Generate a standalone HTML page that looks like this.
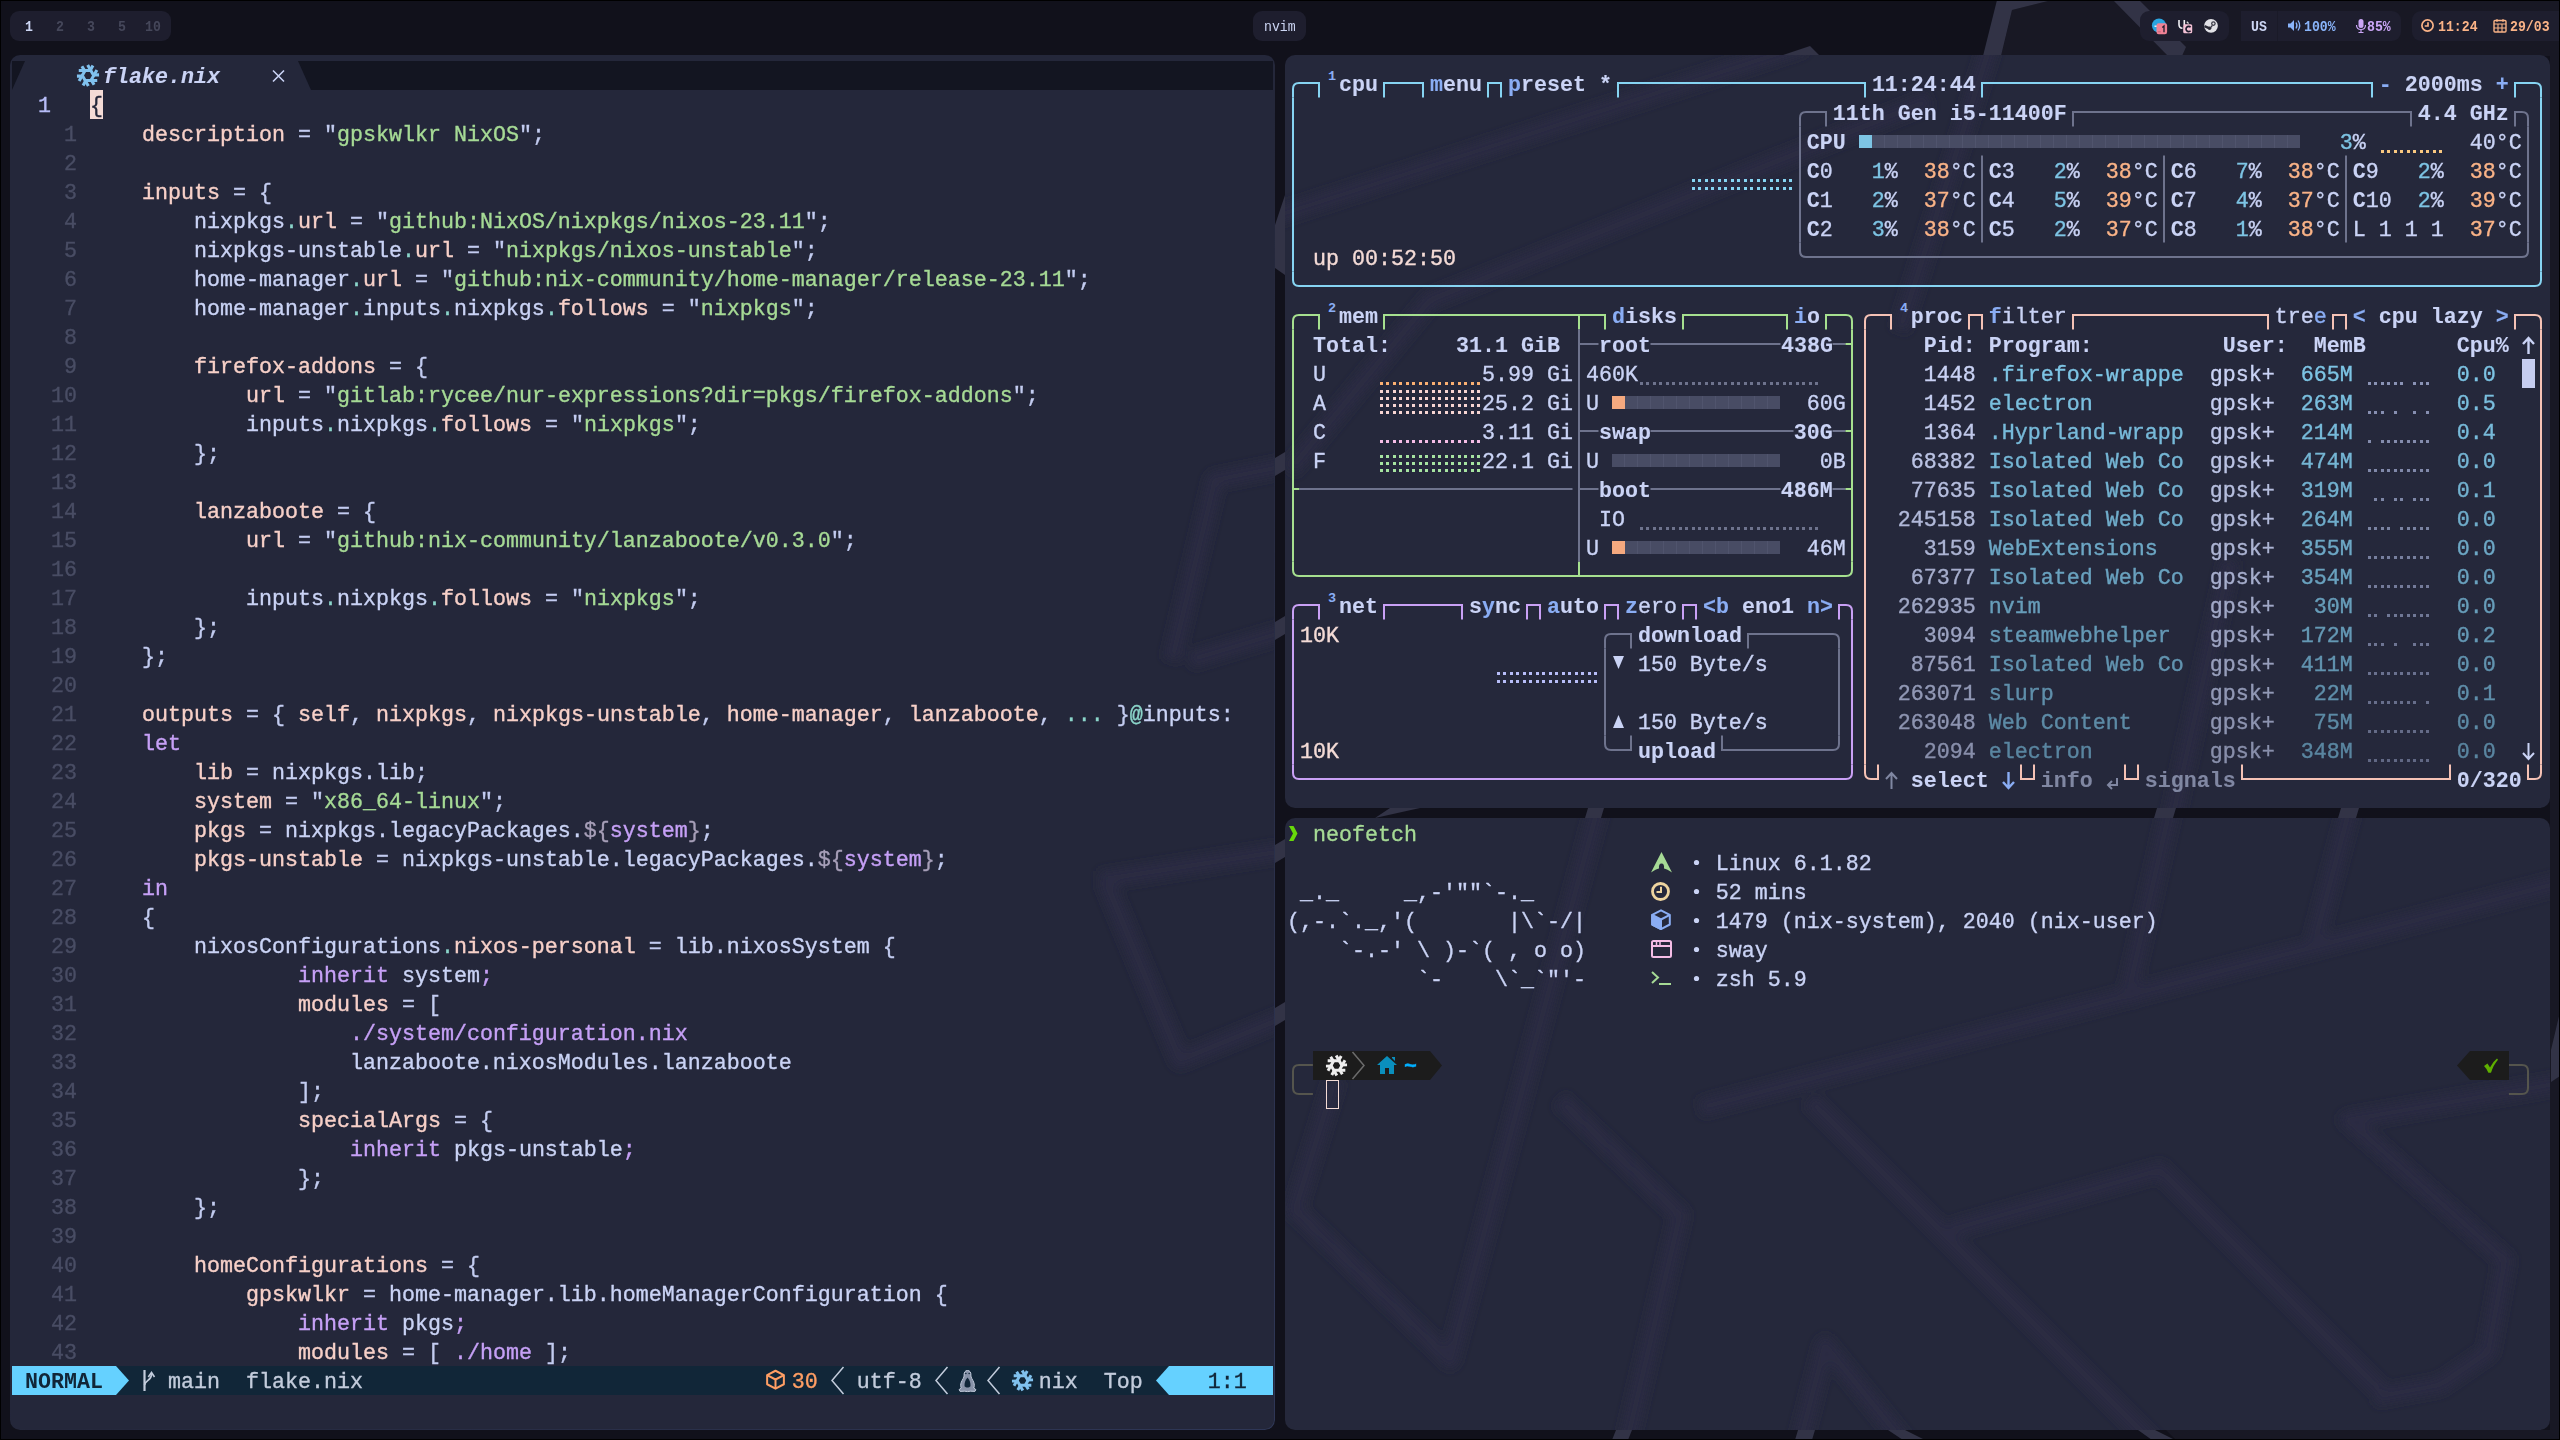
<!DOCTYPE html>
<html><head><meta charset="utf-8"><title>desktop</title>
<style>
*{margin:0;padding:0;box-sizing:border-box}
html,body{width:2560px;height:1440px;overflow:hidden;background:#11111b}
body{position:relative;font-family:"Liberation Mono",monospace}
.win{position:absolute;background:#24273a;border-radius:10px;overflow:hidden}
.act::after{content:'';position:absolute;left:0;top:0;right:0;bottom:0;border-radius:10px;padding:1px;background:linear-gradient(135deg,rgba(46,53,86,0) 50%,#2f3757 100%);-webkit-mask:linear-gradient(#000 0 0) content-box,linear-gradient(#000 0 0);-webkit-mask-composite:xor;mask-composite:exclude}
.term{position:absolute}
.term i,.term svg{position:absolute;display:block}
.term>svg{left:0;top:0;overflow:visible}
.r{position:absolute;left:0;height:29px;line-height:29px;font-size:21.66px;white-space:pre;color:#cad3f5;transform:scaleY(1.06);transform-origin:0 20px;-webkit-text-stroke:0.35px}
.r b{font-weight:400}
#wp{position:absolute;left:0;top:0}
.pill{position:absolute;top:11px;height:30px;background:#1e1e2e;border-radius:9px}
.bt{position:absolute;top:12px;height:31px;line-height:31px;font-size:13.2px;font-weight:700;white-space:pre;transform:scaleY(1.1);transform-origin:0 16px}
/* nvim */
.f{color:#f7d0c8}.p{color:#c3ccf0}.s{color:#a6da95}.d{color:#8bd5ca}.k{color:#c6a0f6}.i{color:#a79fb8}
.ln{color:#494d64}.cl{color:#b7bdf8}.cur{color:#24273a}
.tab{color:#cad3f5;font-weight:700!important;font-style:italic;-webkit-text-stroke:0.1px}
.smode{color:#112638;font-weight:700!important;-webkit-text-stroke:0}.smode2{color:#112638}
.sl{color:#c3ccdc}.sor{color:#ff9e64}
/* btop */
.ti{font-weight:700!important;color:#cad3f5;-webkit-text-stroke:0.1px}.hi{color:#8aadf4}.bd{font-weight:700!important;-webkit-text-stroke:0.1px}
.supd{position:absolute;font:700 13.5px/14px "Liberation Mono",monospace;color:#8aadf4}
.cy{color:#7dc4e4}.pe{color:#fab387}.rw{color:#f4dbd6}.pc{color:#7dc4e4}.ina{color:#8087a2}
/* neofetch */
.gr{color:#a6da95}.tilde{color:#00afff;font-weight:700!important}
</style></head>
<body>
<svg id="wp" width="2560" height="1440">
<path d="M2001 56L2012 10L2052 0H2560V1440H2176L2166 1430H2550V56z" fill="#181824"/>
<path d="M1983 56L1997 0H2052L2012 10L2001 56z" fill="#323346"/>
<path d="M2113 0H2139L2186 47L2182 56H2168z" fill="#323346"/>
<path d="M1780 56L1810 46L1820 56z" fill="#323346"/>
<path d="M1612 1440L1616 1430H1632L1628 1440z M1795 1440L1798 1430H1815L1812 1440z M1888 1430H1905L1925 1440H1903z M2138 1430H2155L2175 1440H2152z" fill="#323346"/>
<path d="M1375 818L1420 808H1390z M1585 818L1588 808H1604L1601 818z M2157 808H2176L2173 818H2154z M2341 808H2359L2356 818H2338z" fill="#323346"/>
<path d="M1285 195V275L1275 268V225z M1275 458L1285 452V470L1275 476z M1275 622L1285 616V634L1275 640z M1275 845L1285 839V857L1275 863z M1275 1008L1285 1002V1020L1275 1026z M2560 1012L2551 1050V1082L2560 1076z" fill="#323346"/>
</svg>
<div class="pill" style="left:10px;width:161px"></div>
<div class="bt" style="left:25px;color:#cdd6f4">1</div>
<div class="bt" style="left:56px;color:#45475a">2</div>
<div class="bt" style="left:87px;color:#45475a">3</div>
<div class="bt" style="left:118px;color:#45475a">5</div>
<div class="bt" style="left:145px;color:#45475a">10</div>
<div class="pill" style="left:1253px;width:53px"></div>
<div class="bt" style="left:1264px;color:#cdd6f4;font-weight:400">nvim</div>
<div class="pill" style="left:2140px;width:89px"></div>
<div class="pill" style="left:2241px;width:160px;border-radius:0 9px 9px 0"></div>
<div style="position:absolute;left:2277px;top:11px;width:1px;height:30px;background:#1a1a28"></div>
<div class="pill" style="left:2412px;width:148px;border-radius:9px 0 0 9px"></div>
<div class="bt" style="left:2251px;color:#cdd6f4">US</div>
<div class="bt" style="left:2304px;color:#89b4fa">100%</div>
<div class="bt" style="left:2367px;color:#cba6f7">85%</div>
<div class="bt" style="left:2438px;color:#fab387">11:24</div>
<div class="bt" style="left:2510px;color:#fab387">29/03</div>
<svg style="position:absolute;left:0;top:0" width="2560" height="55">
<circle cx="2159" cy="25.5" r="7.1" fill="#2ba5e0"/><path d="M2154.500 26.200h2.500" stroke="#fff" stroke-width="1.300"/><rect x="2156.500" y="23.200" width="10.600" height="11" rx="2.200" fill="#f18296"/><path d="M2162.300 27.400l1.700 -1.400v6.300" stroke="#1e1e2e" stroke-width="1.300" fill="none"/><path d="M2157.800 31.800h3" stroke="#c9647a" stroke-width="1"/>
<path d="M2179 20v4.500q0 3.500 3.500 3.800M2184.300 20v5" stroke="#f2f2f6" stroke-width="1.600" fill="none"/><rect x="2183.200" y="24.300" width="9" height="9" rx="1.500" fill="#f5c2d6"/><path d="M2190.600 27.300a2.600 2.600 0 1 0 0 3.400" stroke="#1e1e2e" stroke-width="1.700" fill="none"/><path d="M2186.800 21.800l1.800 1.600" stroke="#ddd" stroke-width="1.300"/>
<circle cx="2211" cy="25.800" r="6.900" fill="#e1e1e6"/><circle cx="2213.400" cy="23.600" r="2.300" fill="#3a3a46"/><circle cx="2213.400" cy="23.600" r="1.100" fill="#e1e1e6"/><path d="M2204.400 26.200l5.200 2.200" stroke="#2a2a36" stroke-width="2.400"/><circle cx="2209.600" cy="28.300" r="1.700" fill="#2a2a36"/><path d="M2210.600 27.600l1.800 -2.200" stroke="#3a3a46" stroke-width="1.400"/>
<path d="M2288 23.5h2.5l3.5 -3.5v11l-3.5 -3.5h-2.5z" fill="#89b4fa"/><path d="M2296 22.5q2 3 0 6M2298 20.5q3.4 5 0 10" stroke="#89b4fa" stroke-width="1.3" fill="none"/>
<rect x="2358.5" y="19" width="5" height="9" rx="2.5" fill="#cba6f7"/><path d="M2356.5 25q0 4.5 4.5 4.5q4.500 0 4.500 -4.500M2361 29.500v2.500M2358.500 32.500h5" stroke="#cba6f7" stroke-width="1.2" fill="none"/>
<circle cx="2427.5" cy="25.5" r="5.6" stroke="#fab387" stroke-width="1.7" fill="none"/><path d="M2428.0 22.14V26.0H2424.7" stroke="#fab387" stroke-width="1.7" fill="none"/>
<rect x="2494" y="20.500" width="12" height="11.500" rx="1" stroke="#fab387" stroke-width="1.4" fill="none"/><path d="M2494 24h12M2497 19v3M2503 19v3M2498 24v8M2502 24v8M2494 28h12" stroke="#fab387" stroke-width="1.1" fill="none"/>
</svg>
<div class="win act" style="left:10px;top:55px;width:1265px;height:1375px"></div>
<div class="win" style="left:1285px;top:55px;width:1265px;height:753px;background:#25283b"></div>
<div class="win" style="left:1285px;top:818px;width:1265px;height:612px;background:#25283b"></div>
<svg style="position:absolute;left:0;top:0" width="2560" height="1440">
<defs><filter id="bl" x="-5%" y="-5%" width="110%" height="110%"><feGaussianBlur stdDeviation="5"/></filter>
<clipPath id="c1"><rect x="1285" y="818" width="1265" height="612" rx="10"/></clipPath>
<clipPath id="c2"><rect x="1285" y="55" width="1265" height="753" rx="10"/></clipPath>
<clipPath id="c3"><rect x="11" y="56" width="1263" height="1373" rx="10"/></clipPath></defs>
<g clip-path="url(#c1)"><g filter="url(#bl)" stroke="#292c43" stroke-width="17" fill="none" stroke-linejoin="round">
<path d="M1600 800L1450 1360L1295 1210L1335 1080"/>
<path d="M1560 1100L1680 1215L1625 1450"/>
<path d="M1810 1100L2160 1450"/>
<path d="M1950 1230L2160 1170L2380 1390"/>
<path d="M2560 1083L2348 1120L2505 1260L2488 1352L2440 1385L2375 1397"/>
<path d="M1798 1450L1825 1345L1910 1450"/>
<path d="M2172 800L2126 1003"/>
<path d="M2352 800L2315 940"/>
<path d="M2570 880L1920 1050L1700 1108"/>
</g></g>
<g clip-path="url(#c2)"><g filter="url(#bl)" stroke="#292c43" stroke-width="17" fill="none" stroke-linejoin="round">
<path d="M1805 45L1270 218"/>
<path d="M1930 100L1430 300L1290 470"/>
<path d="M2172 820L2230 560"/>
<path d="M1992 40L1900 330"/>
</g></g>
<g clip-path="url(#c3)"><g filter="url(#bl)" stroke="#292c43" stroke-width="17" fill="none" stroke-linejoin="round">
<path d="M1290 465L1215 480L1172 660"/>
<path d="M1290 630L1190 660"/>
<path d="M1100 880L1290 850"/>
<path d="M1105 880L1180 1060L1290 1015"/>
</g></g>
</svg>
<div class="term" id="nv" style="left:12px;top:61px;width:1261px;height:1363px">
<i style="left:0px;top:0px;width:1261px;height:29px;background:#131521;"></i>
<svg style="left:0;top:0" width="312" height="29"><path d="M0 29L13 0H286L299 29z" fill="#24273a"/></svg>
<i style="left:78px;top:29px;width:13px;height:29px;background:#f4dbd6;"></i>
<i style="left:0px;top:1305px;width:1261px;height:29px;background:#112638;"></i>
<i style="left:0px;top:1305px;width:104px;height:29px;background:#65d1ff;"></i>
<svg style="left:104px;top:1305px" width="13" height="29"><path d="M0 0L13 14.5L0 29z" fill="#65d1ff"/></svg>
<i style="left:1157px;top:1305px;width:104px;height:29px;background:#65d1ff;"></i>
<svg style="left:1144px;top:1305px" width="13" height="29"><path d="M13 0L0 14.5L13 29z" fill="#65d1ff"/></svg>
<svg width="1261" height="1363" viewBox="0 0 1261 1363"><g transform="translate(76 14.5)" stroke="#80c1ee" stroke-width="3.08" fill="none"><path transform="rotate(0)" d="M-9.24 -4.95H2.2L4.95 -9.9"/><path transform="rotate(60)" d="M-9.24 -4.95H2.2L4.95 -9.9"/><path transform="rotate(120)" d="M-9.24 -4.95H2.2L4.95 -9.9"/><path transform="rotate(180)" d="M-9.24 -4.95H2.2L4.95 -9.9"/><path transform="rotate(240)" d="M-9.24 -4.95H2.2L4.95 -9.9"/><path transform="rotate(300)" d="M-9.24 -4.95H2.2L4.95 -9.9"/></g><path d="M261 9.5l11 11m0 -11l-11 11" stroke="#cad3f5" stroke-width="1.6"/><path d="M132.5 1309V1330" stroke="#c3ccdc" stroke-width="2.2" fill="none"/><path d="M132.5 1324C133 1319 139.5 1320 139.5 1313" stroke="#c3ccdc" stroke-width="1.8" fill="none"/><path d="M136.3 1316L139.5 1311.5L142.5 1316" stroke="#c3ccdc" stroke-width="1.6" fill="none"/><path d="M763.5 1309.76L771.86 1314.13V1323.25L763.5 1327.62L755.14 1323.25V1314.13z" stroke="#ff9e64" stroke-width="2" fill="none" stroke-linejoin="round"/><path d="M755.14 1314.13L763.5 1318.5L771.86 1314.13M763.5 1318.5V1327.62" stroke="#ff9e64" stroke-width="2" fill="none"/><path d="M831.5 1306L820 1319.5L831.5 1333" stroke="#c3ccdc" stroke-width="1.5" fill="none"/><path d="M935.5 1306L924 1319.5L935.5 1333" stroke="#c3ccdc" stroke-width="1.5" fill="none"/><path d="M987.5 1306L976 1319.5L987.5 1333" stroke="#c3ccdc" stroke-width="1.5" fill="none"/><g transform="translate(946.5 1309)"><path d="M9 0.5C6.4 0.5 5.4 2.8 5.6 5.2C5.8 7.6 3.8 9.6 2.8 12.2C1.9 14.6 2 16.6 2.8 18L0.6 19.6L1.6 21.4L6 21.2C8 21.7 10 21.7 12 21.2L16.400 21.400L17.400 19.600L15.200 18C16 16.600 16.100 14.600 15.200 12.200C14.200 9.600 12.200 7.600 12.400 5.200C12.600 2.800 11.600 0.500 9 0.500z" fill="#8892a8" stroke="#c3ccdc" stroke-width="1"/><path d="M9 7.5C7 9.500 5.800 12.600 6 16.200C7.600 18 10.400 18 12 16.200C12.200 12.600 11 9.500 9 7.500z" fill="#112638"/><path d="M7.300 3.600h.1M10.600 3.600h.1" stroke="#112638" stroke-width="1.500" stroke-linecap="round"/></g><g transform="translate(1010.5 1319.5)" stroke="#80c1ee" stroke-width="2.94" fill="none"><path transform="rotate(0)" d="M-8.82 -4.725H2.1L4.725 -9.45"/><path transform="rotate(60)" d="M-8.82 -4.725H2.1L4.725 -9.45"/><path transform="rotate(120)" d="M-8.82 -4.725H2.1L4.725 -9.45"/><path transform="rotate(180)" d="M-8.82 -4.725H2.1L4.725 -9.45"/><path transform="rotate(240)" d="M-8.82 -4.725H2.1L4.725 -9.45"/><path transform="rotate(300)" d="M-8.82 -4.725H2.1L4.725 -9.45"/></g></svg>
<div class="r" style="top:2px;">       <b class="tab">flake.nix</b></div>
<div class="r" style="top:31px;">  <b class="cl">1</b>   <b class="cur">{</b></div>
<div class="r" style="top:60px;">    <b class="ln">1</b>     <b class="f">description</b> <b class="p">= "</b><b class="s">gpskwlkr NixOS</b><b class="p">";</b></div>
<div class="r" style="top:89px;">    <b class="ln">2</b></div>
<div class="r" style="top:118px;">    <b class="ln">3</b>     <b class="f">inputs</b> <b class="p">= {</b></div>
<div class="r" style="top:147px;">    <b class="ln">4</b>         nixpkgs<b class="d">.</b><b class="f">url</b> <b class="p">= "</b><b class="s">github:NixOS/nixpkgs/nixos-23.11</b><b class="p">";</b></div>
<div class="r" style="top:176px;">    <b class="ln">5</b>         nixpkgs-unstable<b class="d">.</b><b class="f">url</b> <b class="p">= "</b><b class="s">nixpkgs/nixos-unstable</b><b class="p">";</b></div>
<div class="r" style="top:205px;">    <b class="ln">6</b>         home-manager<b class="d">.</b><b class="f">url</b> <b class="p">= "</b><b class="s">github:nix-community/home-manager/release-23.11</b><b class="p">";</b></div>
<div class="r" style="top:234px;">    <b class="ln">7</b>         home-manager<b class="d">.</b>inputs<b class="d">.</b>nixpkgs<b class="d">.</b><b class="f">follows</b> <b class="p">= "</b><b class="s">nixpkgs</b><b class="p">";</b></div>
<div class="r" style="top:263px;">    <b class="ln">8</b></div>
<div class="r" style="top:292px;">    <b class="ln">9</b>         <b class="f">firefox-addons</b> <b class="p">= {</b></div>
<div class="r" style="top:321px;">   <b class="ln">10</b>             <b class="f">url</b> <b class="p">= "</b><b class="s">gitlab:rycee/nur-expressions?dir=pkgs/firefox-addons</b><b class="p">";</b></div>
<div class="r" style="top:350px;">   <b class="ln">11</b>             inputs<b class="d">.</b>nixpkgs<b class="d">.</b><b class="f">follows</b> <b class="p">= "</b><b class="s">nixpkgs</b><b class="p">";</b></div>
<div class="r" style="top:379px;">   <b class="ln">12</b>         <b class="p">};</b></div>
<div class="r" style="top:408px;">   <b class="ln">13</b></div>
<div class="r" style="top:437px;">   <b class="ln">14</b>         <b class="f">lanzaboote</b> <b class="p">= {</b></div>
<div class="r" style="top:466px;">   <b class="ln">15</b>             <b class="f">url</b> <b class="p">= "</b><b class="s">github:nix-community/lanzaboote/v0.3.0</b><b class="p">";</b></div>
<div class="r" style="top:495px;">   <b class="ln">16</b></div>
<div class="r" style="top:524px;">   <b class="ln">17</b>             inputs<b class="d">.</b>nixpkgs<b class="d">.</b><b class="f">follows</b> <b class="p">= "</b><b class="s">nixpkgs</b><b class="p">";</b></div>
<div class="r" style="top:553px;">   <b class="ln">18</b>         <b class="p">};</b></div>
<div class="r" style="top:582px;">   <b class="ln">19</b>     <b class="p">};</b></div>
<div class="r" style="top:611px;">   <b class="ln">20</b></div>
<div class="r" style="top:640px;">   <b class="ln">21</b>     <b class="f">outputs</b> <b class="p">= { </b><b class="f">self</b><b class="p">, </b><b class="f">nixpkgs</b><b class="p">, </b><b class="f">nixpkgs-unstable</b><b class="p">, </b><b class="f">home-manager</b><b class="p">, </b><b class="f">lanzaboote</b><b class="p">, </b><b class="d">...</b> <b class="p">}</b><b class="d">@</b>inputs<b class="p">:</b></div>
<div class="r" style="top:669px;">   <b class="ln">22</b>     <b class="k">let</b></div>
<div class="r" style="top:698px;">   <b class="ln">23</b>         <b class="f">lib</b> <b class="p">= </b>nixpkgs.lib<b class="p">;</b></div>
<div class="r" style="top:727px;">   <b class="ln">24</b>         <b class="f">system</b> <b class="p">= "</b><b class="s">x86_64-linux</b><b class="p">";</b></div>
<div class="r" style="top:756px;">   <b class="ln">25</b>         <b class="f">pkgs</b> <b class="p">= </b>nixpkgs.legacyPackages.<b class="i">${</b><b class="k">system</b><b class="i">}</b><b class="p">;</b></div>
<div class="r" style="top:785px;">   <b class="ln">26</b>         <b class="f">pkgs-unstable</b> <b class="p">= </b>nixpkgs-unstable.legacyPackages.<b class="i">${</b><b class="k">system</b><b class="i">}</b><b class="p">;</b></div>
<div class="r" style="top:814px;">   <b class="ln">27</b>     <b class="k">in</b></div>
<div class="r" style="top:843px;">   <b class="ln">28</b>     <b class="p">{</b></div>
<div class="r" style="top:872px;">   <b class="ln">29</b>         nixosConfigurations<b class="d">.</b><b class="f">nixos-personal</b> <b class="p">= </b>lib.nixosSystem <b class="p">{</b></div>
<div class="r" style="top:901px;">   <b class="ln">30</b>                 <b class="k">inherit</b> system<b class="k">;</b></div>
<div class="r" style="top:930px;">   <b class="ln">31</b>                 <b class="f">modules</b> <b class="p">= [</b></div>
<div class="r" style="top:959px;">   <b class="ln">32</b>                     <b class="k">./system/configuration.nix</b></div>
<div class="r" style="top:988px;">   <b class="ln">33</b>                     lanzaboote.nixosModules.lanzaboote</div>
<div class="r" style="top:1017px;">   <b class="ln">34</b>                 <b class="p">];</b></div>
<div class="r" style="top:1046px;">   <b class="ln">35</b>                 <b class="f">specialArgs</b> <b class="p">= {</b></div>
<div class="r" style="top:1075px;">   <b class="ln">36</b>                     <b class="k">inherit</b> pkgs-unstable<b class="k">;</b></div>
<div class="r" style="top:1104px;">   <b class="ln">37</b>                 <b class="p">};</b></div>
<div class="r" style="top:1133px;">   <b class="ln">38</b>         <b class="p">};</b></div>
<div class="r" style="top:1162px;">   <b class="ln">39</b></div>
<div class="r" style="top:1191px;">   <b class="ln">40</b>         <b class="f">homeConfigurations</b> <b class="p">= {</b></div>
<div class="r" style="top:1220px;">   <b class="ln">41</b>             <b class="f">gpskwlkr</b> <b class="p">= </b>home-manager.lib.homeManagerConfiguration <b class="p">{</b></div>
<div class="r" style="top:1249px;">   <b class="ln">42</b>                 <b class="k">inherit</b> pkgs<b class="k">;</b></div>
<div class="r" style="top:1278px;">   <b class="ln">43</b>                 <b class="f">modules</b> <b class="p">= [ </b><b class="k">./home</b> <b class="p">];</b></div>
<div class="r" style="top:1307px;"> <b class="smode">NORMAL</b>     <b class="sl">main</b>  <b class="sl">flake.nix</b>                                 <b class="sor">30</b>   <b class="sl">utf-8</b>         <b class="sl">nix</b>  <b class="sl">Top</b>     <b class="smode2">1:1</b></div>
</div>
<div class="term" id="bt" style="left:1287px;top:69px;width:1261px;height:725px">
<i style="left:1235px;top:290px;width:13px;height:29px;background:#c6cdf0;"></i>
<svg width="1261" height="725" viewBox="0 0 1261 725"><path d="M6 28.5L6 20Q6 14 12 14L32 14L32 28.5" stroke="#86d4f2" stroke-width="2" fill="none"/><path d="M97 28.5L97 14L136 14L136 28.5" stroke="#86d4f2" stroke-width="2" fill="none"/><path d="M201 28.5L201 14L214 14L214 28.5" stroke="#86d4f2" stroke-width="2" fill="none"/><path d="M331 28.5L331 14L578 14L578 28.5" stroke="#86d4f2" stroke-width="2" fill="none"/><path d="M695 28.5L695 14L1085 14L1085 28.5" stroke="#86d4f2" stroke-width="2" fill="none"/><path d="M1228 28.5L1228 14L1248 14Q1254 14 1254 20L1254 28.5" stroke="#86d4f2" stroke-width="2" fill="none"/><path d="M6 202.5L6 211Q6 217 12 217L1248 217Q1254 217 1254 211L1254 202.5" stroke="#86d4f2" stroke-width="2" fill="none"/><path d="M6 28.5L6 202.5" stroke="#86d4f2" stroke-width="2" fill="none"/><path d="M1254 28.5L1254 202.5" stroke="#86d4f2" stroke-width="2" fill="none"/><path d="M513 57.5L513 49Q513 43 519 43L539 43L539 57.5" stroke="#6e738d" stroke-width="2" fill="none"/><path d="M786 57.5L786 43L1124 43L1124 57.5" stroke="#6e738d" stroke-width="2" fill="none"/><path d="M1228 57.5L1228 43L1235 43Q1241 43 1241 49L1241 57.5" stroke="#6e738d" stroke-width="2" fill="none"/><path d="M513 173.5L513 182Q513 188 519 188L1235 188Q1241 188 1241 182L1241 173.5" stroke="#6e738d" stroke-width="2" fill="none"/><path d="M513 57.5L513 173.5" stroke="#6e738d" stroke-width="2" fill="none"/><path d="M1241 57.5L1241 173.5" stroke="#6e738d" stroke-width="2" fill="none"/><rect x="572" y="66" width="13" height="13" fill="#7dc4e4"/><rect x="585" y="66" width="428" height="13" fill="#484c64"/><path d="M597.5 66v13M610.5 66v13M623.5 66v13M636.5 66v13M649.5 66v13M662.5 66v13M675.5 66v13M688.5 66v13M701.5 66v13M714.5 66v13M727.5 66v13M740.5 66v13M753.5 66v13M766.5 66v13M779.5 66v13M792.5 66v13M805.5 66v13M818.5 66v13M831.5 66v13M844.5 66v13M857.5 66v13M870.5 66v13M883.5 66v13M896.5 66v13M909.5 66v13M922.5 66v13M935.5 66v13M948.5 66v13M961.5 66v13M974.5 66v13M987.5 66v13M1000.5 66v13" stroke="#50546d" stroke-width="1"/><path d="M1094 81h3v3h-3zM1100 81h3v3h-3zM1107 81h3v3h-3zM1113 81h3v3h-3zM1120 81h3v3h-3zM1126 81h3v3h-3zM1133 81h3v3h-3zM1139 81h3v3h-3zM1146 81h3v3h-3zM1152 81h3v3h-3z" fill="#f9c880"/><path d="M695 86.5L695 173.5" stroke="#6e738d" stroke-width="2" fill="none"/><path d="M877 86.5L877 173.5" stroke="#6e738d" stroke-width="2" fill="none"/><path d="M1059 86.5L1059 173.5" stroke="#6e738d" stroke-width="2" fill="none"/><path d="M405 110h3v3h-3zM411 110h3v3h-3zM418 110h3v3h-3zM424 110h3v3h-3zM431 110h3v3h-3zM437 110h3v3h-3zM444 110h3v3h-3zM450 110h3v3h-3zM457 110h3v3h-3zM463 110h3v3h-3zM470 110h3v3h-3zM476 110h3v3h-3zM483 110h3v3h-3zM489 110h3v3h-3zM496 110h3v3h-3zM502 110h3v3h-3z" fill="#86d4f2"/><path d="M405 118h3v3h-3zM411 118h3v3h-3zM418 118h3v3h-3zM424 118h3v3h-3zM431 118h3v3h-3zM437 118h3v3h-3zM444 118h3v3h-3zM450 118h3v3h-3zM457 118h3v3h-3zM463 118h3v3h-3zM470 118h3v3h-3zM476 118h3v3h-3zM483 118h3v3h-3zM489 118h3v3h-3zM496 118h3v3h-3zM502 118h3v3h-3z" fill="#86d4f2"/><path d="M6 260.5L6 252Q6 246 12 246L32 246L32 260.5" stroke="#a6e08f" stroke-width="2" fill="none"/><path d="M97 260.5L97 246L318 246L318 260.5" stroke="#a6e08f" stroke-width="2" fill="none"/><path d="M396 260.5L396 246L500 246L500 260.5" stroke="#a6e08f" stroke-width="2" fill="none"/><path d="M539 260.5L539 246L559 246Q565 246 565 252L565 260.5" stroke="#a6e08f" stroke-width="2" fill="none"/><path d="M6 492.5L6 501Q6 507 12 507L559 507Q565 507 565 501L565 492.5" stroke="#a6e08f" stroke-width="2" fill="none"/><path d="M6 260.5L6 492.5" stroke="#a6e08f" stroke-width="2" fill="none"/><path d="M565 260.5L565 492.5" stroke="#a6e08f" stroke-width="2" fill="none"/><path d="M292 246L292 260.5" stroke="#a6e08f" stroke-width="2" fill="none"/><path d="M292 492.5L292 507" stroke="#a6e08f" stroke-width="2" fill="none"/><path d="M292 260.5L292 492.5" stroke="#6e738d" stroke-width="2" fill="none"/><path d="M93 313h3v3h-3zM99 313h3v3h-3zM106 313h3v3h-3zM112 313h3v3h-3zM119 313h3v3h-3zM125 313h3v3h-3zM132 313h3v3h-3zM138 313h3v3h-3zM145 313h3v3h-3zM151 313h3v3h-3zM158 313h3v3h-3zM164 313h3v3h-3zM171 313h3v3h-3zM177 313h3v3h-3zM184 313h3v3h-3zM190 313h3v3h-3z" fill="#fbb072"/><path d="M93 321h3v3h-3zM99 321h3v3h-3zM106 321h3v3h-3zM112 321h3v3h-3zM119 321h3v3h-3zM125 321h3v3h-3zM132 321h3v3h-3zM138 321h3v3h-3zM145 321h3v3h-3zM151 321h3v3h-3zM158 321h3v3h-3zM164 321h3v3h-3zM171 321h3v3h-3zM177 321h3v3h-3zM184 321h3v3h-3zM190 321h3v3h-3z" fill="#f7d5d2"/><path d="M93 328h3v3h-3zM99 328h3v3h-3zM106 328h3v3h-3zM112 328h3v3h-3zM119 328h3v3h-3zM125 328h3v3h-3zM132 328h3v3h-3zM138 328h3v3h-3zM145 328h3v3h-3zM151 328h3v3h-3zM158 328h3v3h-3zM164 328h3v3h-3zM171 328h3v3h-3zM177 328h3v3h-3zM184 328h3v3h-3zM190 328h3v3h-3z" fill="#f7d5d2"/><path d="M93 335h3v3h-3zM99 335h3v3h-3zM106 335h3v3h-3zM112 335h3v3h-3zM119 335h3v3h-3zM125 335h3v3h-3zM132 335h3v3h-3zM138 335h3v3h-3zM145 335h3v3h-3zM151 335h3v3h-3zM158 335h3v3h-3zM164 335h3v3h-3zM171 335h3v3h-3zM177 335h3v3h-3zM184 335h3v3h-3zM190 335h3v3h-3z" fill="#f7d5d2"/><path d="M93 342h3v3h-3zM99 342h3v3h-3zM106 342h3v3h-3zM112 342h3v3h-3zM119 342h3v3h-3zM125 342h3v3h-3zM132 342h3v3h-3zM138 342h3v3h-3zM145 342h3v3h-3zM151 342h3v3h-3zM158 342h3v3h-3zM164 342h3v3h-3zM171 342h3v3h-3zM177 342h3v3h-3zM184 342h3v3h-3zM190 342h3v3h-3z" fill="#f7d5d2"/><path d="M93 371h3v3h-3zM99 371h3v3h-3zM106 371h3v3h-3zM112 371h3v3h-3zM119 371h3v3h-3zM125 371h3v3h-3zM132 371h3v3h-3zM138 371h3v3h-3zM145 371h3v3h-3zM151 371h3v3h-3zM158 371h3v3h-3zM164 371h3v3h-3zM171 371h3v3h-3zM177 371h3v3h-3zM184 371h3v3h-3zM190 371h3v3h-3z" fill="#f5bde6"/><path d="M93 386h3v3h-3zM99 386h3v3h-3zM106 386h3v3h-3zM112 386h3v3h-3zM119 386h3v3h-3zM125 386h3v3h-3zM132 386h3v3h-3zM138 386h3v3h-3zM145 386h3v3h-3zM151 386h3v3h-3zM158 386h3v3h-3zM164 386h3v3h-3zM171 386h3v3h-3zM177 386h3v3h-3zM184 386h3v3h-3zM190 386h3v3h-3z" fill="#a6e3a1"/><path d="M93 393h3v3h-3zM99 393h3v3h-3zM106 393h3v3h-3zM112 393h3v3h-3zM119 393h3v3h-3zM125 393h3v3h-3zM132 393h3v3h-3zM138 393h3v3h-3zM145 393h3v3h-3zM151 393h3v3h-3zM158 393h3v3h-3zM164 393h3v3h-3zM171 393h3v3h-3zM177 393h3v3h-3zM184 393h3v3h-3zM190 393h3v3h-3z" fill="#a6e3a1"/><path d="M93 400h3v3h-3zM99 400h3v3h-3zM106 400h3v3h-3zM112 400h3v3h-3zM119 400h3v3h-3zM125 400h3v3h-3zM132 400h3v3h-3zM138 400h3v3h-3zM145 400h3v3h-3zM151 400h3v3h-3zM158 400h3v3h-3zM164 400h3v3h-3zM171 400h3v3h-3zM177 400h3v3h-3zM184 400h3v3h-3zM190 400h3v3h-3z" fill="#a6e3a1"/><path d="M6 420L12.5 420" stroke="#a6e08f" stroke-width="2" fill="none"/><path d="M12.5 420L285.5 420" stroke="#6e738d" stroke-width="2" fill="none"/><path d="M292 275L311.5 275" stroke="#6e738d" stroke-width="2" fill="none"/><path d="M363.5 275L493.5 275" stroke="#6e738d" stroke-width="2" fill="none"/><path d="M545.5 275L558.5 275" stroke="#6e738d" stroke-width="2" fill="none"/><path d="M558.5 275L565 275" stroke="#a6e08f" stroke-width="2" fill="none"/><path d="M292 362L311.5 362" stroke="#6e738d" stroke-width="2" fill="none"/><path d="M363.5 362L506.5 362" stroke="#6e738d" stroke-width="2" fill="none"/><path d="M545.5 362L558.5 362" stroke="#6e738d" stroke-width="2" fill="none"/><path d="M558.5 362L565 362" stroke="#a6e08f" stroke-width="2" fill="none"/><path d="M292 420L311.5 420" stroke="#6e738d" stroke-width="2" fill="none"/><path d="M363.5 420L493.5 420" stroke="#6e738d" stroke-width="2" fill="none"/><path d="M545.5 420L558.5 420" stroke="#6e738d" stroke-width="2" fill="none"/><path d="M558.5 420L565 420" stroke="#a6e08f" stroke-width="2" fill="none"/><path d="M353 313h3v3h-3zM359 313h3v3h-3zM366 313h3v3h-3zM372 313h3v3h-3zM379 313h3v3h-3zM385 313h3v3h-3zM392 313h3v3h-3zM398 313h3v3h-3zM405 313h3v3h-3zM411 313h3v3h-3zM418 313h3v3h-3zM424 313h3v3h-3zM431 313h3v3h-3zM437 313h3v3h-3zM444 313h3v3h-3zM450 313h3v3h-3zM457 313h3v3h-3zM463 313h3v3h-3zM470 313h3v3h-3zM476 313h3v3h-3zM483 313h3v3h-3zM489 313h3v3h-3zM496 313h3v3h-3zM502 313h3v3h-3zM509 313h3v3h-3zM515 313h3v3h-3zM522 313h3v3h-3zM528 313h3v3h-3z" fill="#6e738d"/><path d="M353 458h3v3h-3zM359 458h3v3h-3zM366 458h3v3h-3zM372 458h3v3h-3zM379 458h3v3h-3zM385 458h3v3h-3zM392 458h3v3h-3zM398 458h3v3h-3zM405 458h3v3h-3zM411 458h3v3h-3zM418 458h3v3h-3zM424 458h3v3h-3zM431 458h3v3h-3zM437 458h3v3h-3zM444 458h3v3h-3zM450 458h3v3h-3zM457 458h3v3h-3zM463 458h3v3h-3zM470 458h3v3h-3zM476 458h3v3h-3zM483 458h3v3h-3zM489 458h3v3h-3zM496 458h3v3h-3zM502 458h3v3h-3zM509 458h3v3h-3zM515 458h3v3h-3zM522 458h3v3h-3zM528 458h3v3h-3z" fill="#6e738d"/><rect x="325" y="327" width="13" height="13" fill="#f5a97f"/><rect x="338" y="327" width="155" height="13" fill="#484c64"/><path d="M350.5 327v13M363.5 327v13M376.5 327v13M389.5 327v13M402.5 327v13M415.5 327v13M428.5 327v13M441.5 327v13M454.5 327v13M467.5 327v13M480.5 327v13" stroke="#50546d" stroke-width="1"/><rect x="325" y="385" width="168" height="13" fill="#484c64"/><path d="M337.5 385v13M350.5 385v13M363.5 385v13M376.5 385v13M389.5 385v13M402.5 385v13M415.5 385v13M428.5 385v13M441.5 385v13M454.5 385v13M467.5 385v13M480.5 385v13" stroke="#50546d" stroke-width="1"/><rect x="325" y="472" width="13" height="13" fill="#f5a97f"/><rect x="338" y="472" width="155" height="13" fill="#484c64"/><path d="M350.5 472v13M363.5 472v13M376.5 472v13M389.5 472v13M402.5 472v13M415.5 472v13M428.5 472v13M441.5 472v13M454.5 472v13M467.5 472v13M480.5 472v13" stroke="#50546d" stroke-width="1"/><path d="M6 550.5L6 542Q6 536 12 536L32 536L32 550.5" stroke="#c9a0f5" stroke-width="2" fill="none"/><path d="M97 550.5L97 536L175 536L175 550.5" stroke="#c9a0f5" stroke-width="2" fill="none"/><path d="M240 550.5L240 536L253 536L253 550.5" stroke="#c9a0f5" stroke-width="2" fill="none"/><path d="M318 550.5L318 536L331 536L331 550.5" stroke="#c9a0f5" stroke-width="2" fill="none"/><path d="M396 550.5L396 536L409 536L409 550.5" stroke="#c9a0f5" stroke-width="2" fill="none"/><path d="M552 550.5L552 536L559 536Q565 536 565 542L565 550.5" stroke="#c9a0f5" stroke-width="2" fill="none"/><path d="M6 695.5L6 704Q6 710 12 710L559 710Q565 710 565 704L565 695.5" stroke="#c9a0f5" stroke-width="2" fill="none"/><path d="M6 550.5L6 695.5" stroke="#c9a0f5" stroke-width="2" fill="none"/><path d="M565 550.5L565 695.5" stroke="#c9a0f5" stroke-width="2" fill="none"/><path d="M318 579.5L318 571Q318 565 324 565L344 565L344 579.5" stroke="#6e738d" stroke-width="2" fill="none"/><path d="M461 579.5L461 565L546 565Q552 565 552 571L552 579.5" stroke="#6e738d" stroke-width="2" fill="none"/><path d="M318 666.5L318 675Q318 681 324 681L344 681L344 666.5" stroke="#6e738d" stroke-width="2" fill="none"/><path d="M435 666.5L435 681L546 681Q552 681 552 675L552 666.5" stroke="#6e738d" stroke-width="2" fill="none"/><path d="M318 579.5L318 666.5" stroke="#6e738d" stroke-width="2" fill="none"/><path d="M552 579.5L552 666.5" stroke="#6e738d" stroke-width="2" fill="none"/><path d="M326 587h11l-5.5 13z" fill="#cad3f5"/><path d="M326 659h11l-5.5 -13z" fill="#cad3f5"/><path d="M210 603h3v3h-3zM216 603h3v3h-3zM223 603h3v3h-3zM229 603h3v3h-3zM236 603h3v3h-3zM242 603h3v3h-3zM249 603h3v3h-3zM255 603h3v3h-3zM262 603h3v3h-3zM268 603h3v3h-3zM275 603h3v3h-3zM281 603h3v3h-3zM288 603h3v3h-3zM294 603h3v3h-3zM301 603h3v3h-3zM307 603h3v3h-3z" fill="#b7bdf8"/><path d="M210 611h3v3h-3zM216 611h3v3h-3zM223 611h3v3h-3zM229 611h3v3h-3zM236 611h3v3h-3zM242 611h3v3h-3zM249 611h3v3h-3zM255 611h3v3h-3zM262 611h3v3h-3zM268 611h3v3h-3zM275 611h3v3h-3zM281 611h3v3h-3zM288 611h3v3h-3zM294 611h3v3h-3zM301 611h3v3h-3zM307 611h3v3h-3z" fill="#b7bdf8"/><path d="M578 260.5L578 252Q578 246 584 246L604 246L604 260.5" stroke="#f5c2b5" stroke-width="2" fill="none"/><path d="M682 260.5L682 246L695 246L695 260.5" stroke="#f5c2b5" stroke-width="2" fill="none"/><path d="M786 260.5L786 246L981 246L981 260.5" stroke="#f5c2b5" stroke-width="2" fill="none"/><path d="M1046 260.5L1046 246L1059 246L1059 260.5" stroke="#f5c2b5" stroke-width="2" fill="none"/><path d="M1228 260.5L1228 246L1248 246Q1254 246 1254 252L1254 260.5" stroke="#f5c2b5" stroke-width="2" fill="none"/><path d="M578 695.5L578 704Q578 710 584 710L591 710L591 695.5" stroke="#f5c2b5" stroke-width="2" fill="none"/><path d="M734 695.5L734 710L747 710L747 695.5" stroke="#f5c2b5" stroke-width="2" fill="none"/><path d="M838 695.5L838 710L851 710L851 695.5" stroke="#f5c2b5" stroke-width="2" fill="none"/><path d="M955 695.5L955 710L1163 710L1163 695.5" stroke="#f5c2b5" stroke-width="2" fill="none"/><path d="M1241 695.5L1241 710L1248 710Q1254 710 1254 704L1254 695.5" stroke="#f5c2b5" stroke-width="2" fill="none"/><path d="M578 260.5L578 695.5" stroke="#f5c2b5" stroke-width="2" fill="none"/><path d="M1254 260.5L1254 695.5" stroke="#f5c2b5" stroke-width="2" fill="none"/><path d="M1081 313h3v3h-3zM1087 313h3v3h-3zM1094 313h3v3h-3zM1100 313h3v3h-3zM1107 313h3v3h-3zM1113 313h3v3h-3zM1126 313h3v3h-3zM1133 313h3v3h-3zM1139 313h3v3h-3z" fill="#8a93b5" opacity="1.00"/><path d="M1081 342h3v3h-3zM1087 342h3v3h-3zM1094 342h3v3h-3zM1107 342h3v3h-3zM1126 342h3v3h-3zM1139 342h3v3h-3z" fill="#8a93b5" opacity="0.97"/><path d="M1081 371h3v3h-3zM1094 371h3v3h-3zM1100 371h3v3h-3zM1107 371h3v3h-3zM1113 371h3v3h-3zM1120 371h3v3h-3zM1126 371h3v3h-3zM1133 371h3v3h-3zM1139 371h3v3h-3z" fill="#8a93b5" opacity="0.94"/><path d="M1081 400h3v3h-3zM1087 400h3v3h-3zM1094 400h3v3h-3zM1100 400h3v3h-3zM1107 400h3v3h-3zM1113 400h3v3h-3zM1120 400h3v3h-3zM1126 400h3v3h-3zM1133 400h3v3h-3zM1139 400h3v3h-3z" fill="#8a93b5" opacity="0.91"/><path d="M1087 429h3v3h-3zM1094 429h3v3h-3zM1107 429h3v3h-3zM1113 429h3v3h-3zM1126 429h3v3h-3zM1133 429h3v3h-3zM1139 429h3v3h-3z" fill="#8a93b5" opacity="0.88"/><path d="M1081 458h3v3h-3zM1087 458h3v3h-3zM1094 458h3v3h-3zM1100 458h3v3h-3zM1113 458h3v3h-3zM1120 458h3v3h-3zM1126 458h3v3h-3zM1133 458h3v3h-3zM1139 458h3v3h-3z" fill="#8a93b5" opacity="0.85"/><path d="M1081 487h3v3h-3zM1087 487h3v3h-3zM1094 487h3v3h-3zM1100 487h3v3h-3zM1107 487h3v3h-3zM1113 487h3v3h-3zM1120 487h3v3h-3zM1126 487h3v3h-3zM1133 487h3v3h-3zM1139 487h3v3h-3z" fill="#8a93b5" opacity="0.82"/><path d="M1081 516h3v3h-3zM1087 516h3v3h-3zM1094 516h3v3h-3zM1100 516h3v3h-3zM1107 516h3v3h-3zM1113 516h3v3h-3zM1120 516h3v3h-3zM1126 516h3v3h-3zM1133 516h3v3h-3zM1139 516h3v3h-3z" fill="#8a93b5" opacity="0.78"/><path d="M1081 545h3v3h-3zM1087 545h3v3h-3zM1100 545h3v3h-3zM1107 545h3v3h-3zM1113 545h3v3h-3zM1120 545h3v3h-3zM1126 545h3v3h-3zM1133 545h3v3h-3zM1139 545h3v3h-3z" fill="#8a93b5" opacity="0.75"/><path d="M1081 574h3v3h-3zM1087 574h3v3h-3zM1094 574h3v3h-3zM1107 574h3v3h-3zM1126 574h3v3h-3zM1133 574h3v3h-3zM1139 574h3v3h-3z" fill="#8a93b5" opacity="0.72"/><path d="M1081 603h3v3h-3zM1087 603h3v3h-3zM1094 603h3v3h-3zM1100 603h3v3h-3zM1107 603h3v3h-3zM1113 603h3v3h-3zM1120 603h3v3h-3zM1126 603h3v3h-3zM1133 603h3v3h-3zM1139 603h3v3h-3z" fill="#8a93b5" opacity="0.69"/><path d="M1081 632h3v3h-3zM1087 632h3v3h-3zM1094 632h3v3h-3zM1100 632h3v3h-3zM1107 632h3v3h-3zM1113 632h3v3h-3zM1120 632h3v3h-3zM1126 632h3v3h-3zM1139 632h3v3h-3z" fill="#8a93b5" opacity="0.66"/><path d="M1081 661h3v3h-3zM1087 661h3v3h-3zM1094 661h3v3h-3zM1100 661h3v3h-3zM1107 661h3v3h-3zM1113 661h3v3h-3zM1120 661h3v3h-3zM1126 661h3v3h-3zM1133 661h3v3h-3zM1139 661h3v3h-3z" fill="#8a93b5" opacity="0.63"/><path d="M1081 690h3v3h-3zM1087 690h3v3h-3zM1094 690h3v3h-3zM1100 690h3v3h-3zM1107 690h3v3h-3zM1113 690h3v3h-3zM1120 690h3v3h-3zM1126 690h3v3h-3zM1133 690h3v3h-3zM1139 690h3v3h-3z" fill="#8a93b5" opacity="0.60"/><path d="M1241.5 285V269M1236.0 275L1241.5 269L1247.0 275" stroke="#cad3f5" stroke-width="2.4" fill="none"/><path d="M1241.5 674V690M1236.0 684L1241.5 690L1247.0 684" stroke="#cad3f5" stroke-width="2" fill="none"/><path d="M604.5 720V704M599.0 710L604.5 704L610.0 710" stroke="#8087a2" stroke-width="2" fill="none"/><path d="M721.5 703V719M716.0 713L721.5 719L727.0 713" stroke="#8aadf4" stroke-width="2.4" fill="none"/><path d="M830 709V716H821M825 712L821 716L825 720" stroke="#8087a2" stroke-width="2" fill="none"/></svg>
<div class="r" style="top:2px;">    <b class="ti">cpu</b>    <b class="hi bd">m</b><b class="ti">enu</b>  <b class="hi bd">p</b><b class="ti">reset *</b>                    <b class="ti">11:24:44</b>                               <b class="hi bd">-</b><b class="ti"> 2000ms </b><b class="hi bd">+</b></div>
<div class="r" style="top:31px;">                                          <b class="ti">11th Gen i5-11400F</b>                           <b class="ti">4.4 GHz</b></div>
<div class="r" style="top:60px;">                                        <b class="ti">CPU</b>                                      <b class="cy">3</b>%        40°C</div>
<div class="r" style="top:89px;">                                        <b class="ti">C</b>0   <b class="cy">1</b>%  <b class="pe">38</b>°C <b class="ti">C</b>3   <b class="cy">2</b>%  <b class="pe">38</b>°C <b class="ti">C</b>6   <b class="cy">7</b>%  <b class="pe">38</b>°C <b class="ti">C</b>9   <b class="cy">2</b>%  <b class="pe">38</b>°C</div>
<div class="r" style="top:118px;">                                        <b class="ti">C</b>1   <b class="cy">2</b>%  <b class="pe">37</b>°C <b class="ti">C</b>4   <b class="cy">5</b>%  <b class="pe">39</b>°C <b class="ti">C</b>7   <b class="cy">4</b>%  <b class="pe">37</b>°C <b class="ti">C</b>10  <b class="cy">2</b>%  <b class="pe">39</b>°C</div>
<div class="r" style="top:147px;">                                        <b class="ti">C</b>2   <b class="cy">3</b>%  <b class="pe">38</b>°C <b class="ti">C</b>5   <b class="cy">2</b>%  <b class="pe">37</b>°C <b class="ti">C</b>8   <b class="cy">1</b>%  <b class="pe">38</b>°C L 1 1 1  <b class="pe">37</b>°C</div>
<div class="r" style="top:176px;">  <b class="rw">up 00:52:50</b></div>
<div class="r" style="top:234px;">    <b class="ti">mem</b>                  <b class="hi bd">d</b><b class="ti">isks</b>         <b class="hi bd">i</b><b class="ti">o</b>       <b class="ti">proc</b>  <b class="hi bd">f</b>ilter                tre<b class="hi">e</b>  <b class="hi bd">&lt;</b><b class="ti"> cpu lazy </b><b class="hi bd">&gt;</b></div>
<div class="r" style="top:263px;">  <b class="ti">Total:</b>     <b class="ti">31.1 GiB</b>   <b class="ti">root</b>          <b class="ti">438G</b>       <b class="ti">Pid:</b> <b class="ti">Program:</b>          <b class="ti">User:</b>  <b class="ti">MemB</b>       <b class="ti">Cpu%</b></div>
<div class="r" style="top:292px;">  U            5.99 Gi 460K</div>
<div class="r" style="top:321px;">  A            25.2 Gi U                60G</div>
<div class="r" style="top:350px;">  C            3.11 Gi  <b class="ti">swap</b>           <b class="ti">30G</b></div>
<div class="r" style="top:379px;">  F            22.1 Gi U                 0B</div>
<div class="r" style="top:408px;">                        <b class="ti">boot</b>          <b class="ti">486M</b></div>
<div class="r" style="top:437px;">                        IO</div>
<div class="r" style="top:466px;">                       U                46M</div>
<div class="r" style="top:524px;">    <b class="ti">net</b>       <b class="ti">s</b><b class="hi bd">y</b><b class="ti">nc</b>  <b class="hi bd">a</b><b class="ti">uto</b>  <b class="hi bd">z</b>ero  <b class="hi bd">&lt;b</b><b class="ti"> eno1 </b><b class="hi bd">n&gt;</b></div>
<div class="r" style="top:553px;"> <b class="rw">10K</b>                       <b class="ti">download</b></div>
<div class="r" style="top:582px;">                           150 Byte/s</div>
<div class="r" style="top:640px;">                           150 Byte/s</div>
<div class="r" style="top:669px;"> <b class="rw">10K</b>                       <b class="ti">upload</b></div>
<div class="r" style="top:698px;">                                                <b class="ti">select</b>    <b class="ina bd">info</b>    <b class="ina bd">signals</b>                 <b class="ti">0/320</b></div>
<span class="supd" style="left:41px;top:1px">1</span>
<span class="supd" style="left:41px;top:233px">2</span>
<span class="supd" style="left:41px;top:523px">3</span>
<span class="supd" style="left:613px;top:233px">4</span>
</div>
<div class="term" id="bp" style="left:1287px;top:69px;width:1261px;height:725px">
<div class="r" style="top:292px;opacity:1.00">                                                 1448 <b class="pc">.firefox-wrappe</b>  gpsk+  <b class="pc">665M</b>        <b class="pc">0.0</b></div>
<div class="r" style="top:321px;opacity:0.97">                                                 1452 <b class="pc">electron</b>         gpsk+  <b class="pc">263M</b>        <b class="pc">0.5</b></div>
<div class="r" style="top:350px;opacity:0.94">                                                 1364 <b class="pc">.Hyprland-wrapp</b>  gpsk+  <b class="pc">214M</b>        <b class="pc">0.4</b></div>
<div class="r" style="top:379px;opacity:0.91">                                                68382 <b class="pc">Isolated Web Co</b>  gpsk+  <b class="pc">474M</b>        <b class="pc">0.0</b></div>
<div class="r" style="top:408px;opacity:0.88">                                                77635 <b class="pc">Isolated Web Co</b>  gpsk+  <b class="pc">319M</b>        <b class="pc">0.1</b></div>
<div class="r" style="top:437px;opacity:0.85">                                               245158 <b class="pc">Isolated Web Co</b>  gpsk+  <b class="pc">264M</b>        <b class="pc">0.0</b></div>
<div class="r" style="top:466px;opacity:0.82">                                                 3159 <b class="pc">WebExtensions</b>    gpsk+  <b class="pc">355M</b>        <b class="pc">0.0</b></div>
<div class="r" style="top:495px;opacity:0.78">                                                67377 <b class="pc">Isolated Web Co</b>  gpsk+  <b class="pc">354M</b>        <b class="pc">0.0</b></div>
<div class="r" style="top:524px;opacity:0.75">                                               262935 <b class="pc">nvim</b>             gpsk+   <b class="pc">30M</b>        <b class="pc">0.0</b></div>
<div class="r" style="top:553px;opacity:0.72">                                                 3094 <b class="pc">steamwebhelper</b>   gpsk+  <b class="pc">172M</b>        <b class="pc">0.2</b></div>
<div class="r" style="top:582px;opacity:0.69">                                                87561 <b class="pc">Isolated Web Co</b>  gpsk+  <b class="pc">411M</b>        <b class="pc">0.0</b></div>
<div class="r" style="top:611px;opacity:0.66">                                               263071 <b class="pc">slurp</b>            gpsk+   <b class="pc">22M</b>        <b class="pc">0.1</b></div>
<div class="r" style="top:640px;opacity:0.63">                                               263048 <b class="pc">Web Content</b>      gpsk+   <b class="pc">75M</b>        <b class="pc">0.0</b></div>
<div class="r" style="top:669px;opacity:0.60">                                                 2094 <b class="pc">electron</b>         gpsk+  <b class="pc">348M</b>        <b class="pc">0.0</b></div>
</div>
<div class="term" id="nf" style="left:1287px;top:819px;width:1261px;height:609px">
<svg width="1261" height="609" viewBox="0 0 1261 609"><path d="M2 7h4.5l4 7.5l-4 7.5h-4.5l4 -7.5z" fill="#67d90a"/><circle cx="409.5" cy="43.5" r="2.6" fill="#cad3f5"/><circle cx="409.5" cy="72.5" r="2.6" fill="#cad3f5"/><circle cx="409.5" cy="101.5" r="2.6" fill="#cad3f5"/><circle cx="409.5" cy="130.5" r="2.6" fill="#cad3f5"/><circle cx="409.5" cy="159.5" r="2.6" fill="#cad3f5"/><path d="M374.5 33L385 53.5Q380 50 377 49.5Q377.5 44.5 374.5 44.5Q371.5 44.5 372 49.5Q369 50 364 53.5z" fill="#a6da95"/><circle cx="373.5" cy="72.5" r="8" stroke="#eed49f" stroke-width="2.8" fill="none"/><path d="M374.0 67.7V73.0H369.5" stroke="#eed49f" stroke-width="2" fill="none"/><path d="M374 91.3L382.8 95.9V105.5L374 110.1L365.2 105.5V95.9z" stroke="#8aadf4" stroke-width="2" fill="none" stroke-linejoin="round"/><path d="M365.2 95.9L374 100.5V110.1L365.2 105.5z" fill="#8aadf4" stroke="#8aadf4" stroke-width="2" stroke-linejoin="round"/><path d="M374 100.5L382.8 95.9" stroke="#8aadf4" stroke-width="2" fill="none"/><rect x="365" y="122" width="19" height="16" rx="1.5" stroke="#f5bde6" stroke-width="2" fill="none"/><path d="M365 127h19" stroke="#f5bde6" stroke-width="2"/><path d="M369.5 123v4M373 123v4" stroke="#f5bde6" stroke-width="1.5"/><path d="M365 153L371 158.5L365 164" stroke="#a6da95" stroke-width="2" fill="none"/><path d="M372 165h12" stroke="#a6da95" stroke-width="2"/><path d="M25.89 246L12 246Q6 246 6 252L6 269Q6 275 12 275L25.89 275" stroke="#55554d" stroke-width="2" fill="none"/><path d="M1221.89 246L1235 246Q1241 246 1241 252L1241 269Q1241 275 1235 275L1221.89 275" stroke="#55554d" stroke-width="2" fill="none"/><path d="M26 232H143L155 246.5L143 261H26z" fill="#1c1c1c"/><path d="M1222 232H1183L1170 246.5L1183 261H1222z" fill="#1c1c1c"/><g transform="translate(49.5 246.5)" stroke="#eeeeee" stroke-width="2.94" fill="none"><path transform="rotate(0)" d="M-8.82 -4.725H2.1L4.725 -9.45"/><path transform="rotate(60)" d="M-8.82 -4.725H2.1L4.725 -9.45"/><path transform="rotate(120)" d="M-8.82 -4.725H2.1L4.725 -9.45"/><path transform="rotate(180)" d="M-8.82 -4.725H2.1L4.725 -9.45"/><path transform="rotate(240)" d="M-8.82 -4.725H2.1L4.725 -9.45"/><path transform="rotate(300)" d="M-8.82 -4.725H2.1L4.725 -9.45"/></g><path d="M65.5 233L77 246.5L65.5 260" stroke="#6c6c6c" stroke-width="1.5" fill="none"/><path d="M100 237L110 246h-3v9h-5v-6h-4v6h-5v-9h-3z M105 238h3v4l-3 -3z" fill="#0a8fbd"/><path d="M1197 247l3.5 -2.5l2.5 4q3 -6 7 -9l1 1.2q-4.5 5 -7 13h-2.6q-1.6 -4 -4.4 -6.7z" fill="#5faf00"/><rect x="39.5" y="261.5" width="12" height="28" stroke="#f4dbd6" stroke-width="1" fill="none"/></svg>
<div class="r" style="top:2px;">  <b class="gr">neofetch</b></div>
<div class="r" style="top:31px;">                                 Linux 6.1.82</div>
<div class="r" style="top:60px;"> _._     _,-'""`-._              52 mins</div>
<div class="r" style="top:89px;">(,-.`._,'(       |\`-/|          1479 (nix-system), 2040 (nix-user)</div>
<div class="r" style="top:118px;">    `-.-' \ )-`( , o o)          sway</div>
<div class="r" style="top:147px;">          `-    \`_`"'-          zsh 5.9</div>
<div class="r" style="top:234px;">         <b class="tilde">~</b></div>
</div>
<div style="position:absolute;left:0;top:0;width:2560px;height:1440px;border:1px solid #000;pointer-events:none"></div>
</body></html>
